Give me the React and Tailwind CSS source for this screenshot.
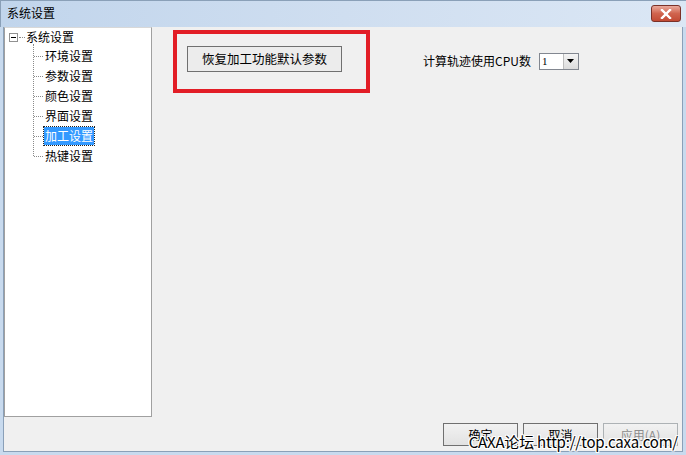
import React from "react";

const items = ["环境设置", "参数设置", "颜色设置", "界面设置", "加工设置", "热键设置"];

function TreePanel() {
  return (
    <div className="relative w-[148px] h-[390px] bg-white border border-[#a0a0a0] border-t-[#d8d8d8] text-[12px] text-black">
      {/* root node */}
      <div className="flex items-center h-[18px] pl-[4px]">
        <span className="w-[9px] h-[9px] border border-[#919191] flex items-center justify-center">
          <span className="w-[5px] h-[1px] bg-black" />
        </span>
        <span className="w-[6px] border-t border-dotted border-[#8a8a8a] ml-[1px]" />
        <span className="ml-[1px]">系统设置</span>
      </div>
      {/* children */}
      <div className="relative pl-[28px]">
        <div className="absolute left-[28px] top-[-2px] h-[112px] border-l border-dotted border-[#8a8a8a]" />
        {items.map((t) => (
          <div key={t} className="flex items-center h-[20px]">
            <span className="w-[9px] border-t border-dotted border-[#8a8a8a] ml-[1px]" />
            <span
              className={
                t === "加工设置"
                  ? "ml-[1px] px-[1px] bg-[#3399ff] text-white outline outline-1 outline-dotted outline-[#222]"
                  : "ml-[2px]"
              }
            >
              {t}
            </span>
          </div>
        ))}
      </div>
    </div>
  );
}

function WinButton({ children, disabled }) {
  return (
    <div
      className={
        "w-[75px] h-[23px] border flex items-center justify-center text-[12px] bg-gradient-to-b from-[#f2f2f2] to-[#e2e2e2] " +
        (disabled ? "border-[#adb2b5] text-[#8d8d8d]" : "border-[#707070] text-black")
      }
    >
      {children}
    </div>
  );
}

export default function App() {
  return (
    <div
      className="w-[686px] h-[455px] bg-[#c8daee] flex flex-col"
      style={{ fontFamily: '"Noto Sans CJK SC", "Liberation Sans", sans-serif' }}
    >
      {/* title bar */}
      <div className="h-[27px] flex items-start justify-between bg-gradient-to-r from-[#c1d5ec] via-[#cfdef0] to-[#dbe7f5] border-t border-l border-[#8aa0b8]">
        <span className="pl-[6px] pt-[4px] text-[12px] text-black leading-[16px]">系统设置</span>
        <div className="mt-[4px] mr-[5px] w-[30px] h-[17px] rounded-[3px] border border-[#7a3128] bg-gradient-to-b from-[#e9a99c] via-[#d0644e] to-[#c24a34] flex items-center justify-center">
          <svg width="12" height="10" viewBox="0 0 12 10">
            <path d="M2 1 L10 9 M10 1 L2 9" stroke="#ffffff" strokeWidth="2.4" strokeLinecap="square" />
            <path d="M2 1 L10 9 M10 1 L2 9" stroke="#ffffff" strokeWidth="1.6" />
          </svg>
        </div>
      </div>

      {/* client area */}
      <div className="flex-1 mx-[3px] mb-[3px] border-l border-r border-b border-[#8aa0b8] bg-[#f0f0f0] flex flex-col relative">
        <div className="flex">
          <TreePanel />
          <div className="relative flex-1 flex items-start pl-[35px] pt-[19px]">
            {/* red highlight frame */}
            <div className="absolute left-[21px] top-[3px] w-[197px] h-[63px] border-[4px] border-[#e21d26]" />
            <div className="w-[155px] h-[26px] border border-[#707070] bg-[#ececec] flex items-center justify-center text-[12.5px] text-black">
              恢复加工功能默认参数
            </div>
            <div className="ml-[81px] mt-[6px] flex items-center">
              <span className="text-[12px] text-black">计算轨迹使用CPU数</span>
              <div className="ml-[8px] w-[40px] h-[17px] border border-[#828790] bg-white flex items-center">
                <span className="flex-1 pl-[2px] text-[11px] leading-none" style={{ fontFamily: '"Liberation Serif", serif' }}>
                  1
                </span>
                <span className="w-[15px] h-[15px] bg-gradient-to-b from-[#f4f4f4] to-[#dcdcdc] border-l border-[#bdbdbd] flex items-center justify-center">
                  <svg width="7" height="4" viewBox="0 0 7 4">
                    <path d="M0 0 H7 L3.5 4 Z" fill="#000" />
                  </svg>
                </span>
              </div>
            </div>
          </div>
        </div>

        {/* bottom buttons */}
        <div className="flex justify-end gap-[5px] pr-[4px] pt-[6px]">
          <WinButton>确定</WinButton>
          <WinButton>取消</WinButton>
          <WinButton disabled>应用(A)</WinButton>
        </div>

        {/* watermark */}
        <div
          className="absolute right-[4px] bottom-[-1px] text-[15px] text-black leading-[20px] whitespace-nowrap tracking-[-0.2px]"
          style={{
            textShadow:
              "1px 0 0 #fff, -1px 0 0 #fff, 0 1px 0 #fff, 0 -1px 0 #fff, 1px 1px 0 #fff, -1px -1px 0 #fff, 1px -1px 0 #fff, -1px 1px 0 #fff",
          }}
        >
          CAXA论坛 http://top.caxa.com/
        </div>
      </div>
    </div>
  );
}
